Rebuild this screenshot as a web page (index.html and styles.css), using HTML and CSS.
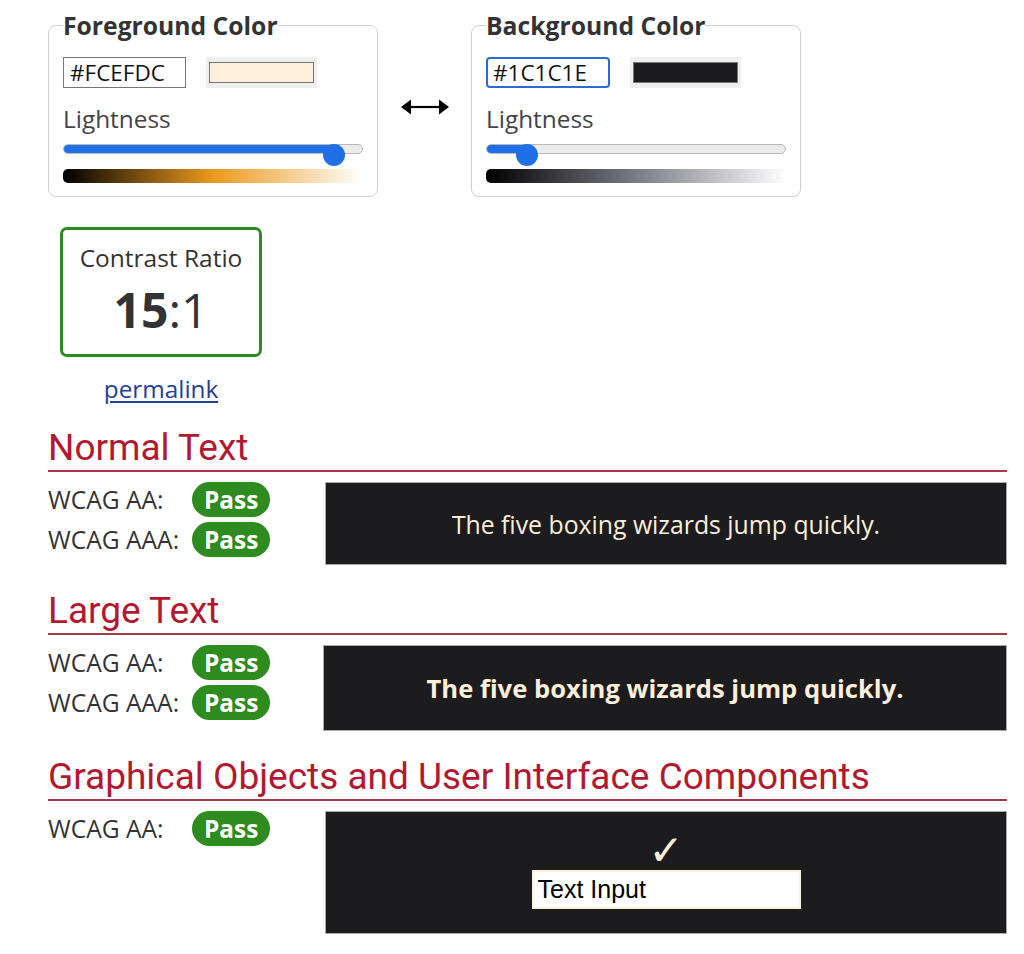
FILE: index.html
```html
<!DOCTYPE html>
<html lang="en">
<head>
<meta charset="utf-8">
<title>Contrast Checker</title>
<link rel="stylesheet" href="styles.css">
</head>
<body>
<main class="page">
  <div class="pickers">
    <fieldset class="picker">
      <legend>Foreground Color</legend>
      <div class="hex-row">
        <input class="hex" type="text" value="#FCEFDC">
        <span class="swatch"><span class="swatch-color fg-swatch"></span></span>
      </div>
      <div class="label">Lightness</div>
      <div class="slider">
        <div class="track"><div class="fill" style="width: 90.3%"></div></div>
        <div class="thumb" style="left: 90.3%"></div>
      </div>
      <div class="gradient fg-gradient"></div>
    </fieldset>
    <div class="swap" aria-label="swap colors">
      <svg width="48" height="18" viewBox="0 0 48 18"><path d="M8 9H40" stroke="#000" stroke-width="2.2"/><path d="M0 9L10 1.5V16.5Z" fill="#000"/><path d="M48 9L38 1.5V16.5Z" fill="#000"/></svg>
    </div>
    <fieldset class="picker">
      <legend>Background Color</legend>
      <div class="hex-row">
        <input class="hex hex-focus" type="text" value="#1C1C1E">
        <span class="swatch"><span class="swatch-color bg-swatch"></span></span>
      </div>
      <div class="label">Lightness</div>
      <div class="slider">
        <div class="track"><div class="fill" style="width: 13.7%"></div></div>
        <div class="thumb" style="left: 13.7%"></div>
      </div>
      <div class="gradient bg-gradient"></div>
    </fieldset>
  </div>

  <div class="ratio-block">
    <div class="ratio-box">
      <div class="ratio-title">Contrast Ratio</div>
      <div class="ratio-value"><strong>15</strong>:1</div>
    </div>
    <a class="permalink" href="#">permalink</a>
  </div>

  <section class="result">
    <h2>Normal Text</h2>
    <div class="result-row">
      <div class="levels">
        <div class="level"><span class="level-name">WCAG AA:</span><span class="badge">Pass</span></div>
        <div class="level"><span class="level-name">WCAG AAA:</span><span class="badge">Pass</span></div>
      </div>
      <div class="sample sample-normal">The five boxing wizards jump quickly.</div>
    </div>
  </section>

  <section class="result">
    <h2>Large Text</h2>
    <div class="result-row">
      <div class="levels">
        <div class="level"><span class="level-name">WCAG AA:</span><span class="badge">Pass</span></div>
        <div class="level"><span class="level-name">WCAG AAA:</span><span class="badge">Pass</span></div>
      </div>
      <div class="sample sample-large">The five boxing wizards jump quickly.</div>
    </div>
  </section>

  <section class="result">
    <h2>Graphical Objects and User Interface Components</h2>
    <div class="result-row">
      <div class="levels">
        <div class="level"><span class="level-name">WCAG AA:</span><span class="badge">Pass</span></div>
      </div>
      <div class="sample sample-ui">
        <div class="check">&#10003;</div>
        <div class="text-input">Text Input</div>
      </div>
    </div>
  </section>
</main>
</body>
</html>
```

FILE: styles.css
```css
* { box-sizing: border-box; }

body {
  margin: 0;
  font-family: "Open Sans", "Liberation Sans", sans-serif;
  color: #333;
  background: #fff;
}

.page {
  padding: 9px 17px 20px 48px;
}

.pickers {
  display: flex;
  align-items: center;
}

.picker {
  width: 330px;
  margin: 0;
  border: 1px solid #cfcfcf;
  border-radius: 8px;
  padding: 15px 14px 13px 14px;
}

.picker legend {
  padding: 0;
  font-size: 24.7px;
  font-weight: 700;
  line-height: 33px;
  color: #333;
}

.hex-row {
  display: flex;
  align-items: center;
  gap: 20px;
}

.hex {
  width: 123px;
  height: 31px;
  padding: 0 6px;
  border: 1px solid #767676;
  border-radius: 0;
  font-family: "Open Sans", sans-serif;
  font-size: 22.5px;
  color: #111;
  background: #fff;
  outline: none;
}

.hex-focus {
  width: 124px;
  border: 2px solid #2d6bd0;
  border-radius: 4px;
  padding: 0 5px;
}

.swatch {
  display: block;
  width: 111px;
  height: 31px;
  padding: 5px 3px;
  background: #efefef;
}

.swatch-color {
  display: block;
  width: 100%;
  height: 100%;
  border: 1px solid #777;
}

.fg-swatch { background: #FCEFDC; }
.bg-swatch { background: #1C1C1E; }

.label {
  margin-top: 14px;
  font-size: 24.4px;
  line-height: 33px;
  color: #444;
}

.slider {
  position: relative;
  height: 22px;
  margin-top: 9px;
}

.track {
  height: 10px;
  margin-top: 6px;
  border-radius: 5px;
  background: #ececec;
  border: 1px solid #b8b8b8;
  overflow: hidden;
}

.fill {
  height: 100%;
  background: #1f70e6;
}

.thumb {
  position: absolute;
  top: 0;
  width: 22px;
  height: 22px;
  margin-left: -11px;
  border-radius: 50%;
  background: #1f70e6;
}

.gradient {
  height: 14px;
  margin-top: 3px;
  border-radius: 5px 0 0 5px;
}

.fg-gradient {
  background: linear-gradient(to right, #000, hsl(36, 84%, 52%) 50%, #fff);
}

.bg-gradient {
  background: linear-gradient(to right, #000, hsl(240, 4%, 50%) 50%, #fff);
}

.swap {
  width: 93px;
  display: flex;
  justify-content: center;
  padding-top: 8px;
}

.swap svg { display: block; }

.ratio-block {
  width: 226px;
  margin-top: 30px;
  text-align: center;
}

.ratio-box {
  width: 202px;
  margin: 0 auto;
  border: 3px solid #2e8b22;
  border-radius: 7px;
  padding: 11px 0 11px;
}

.ratio-title {
  font-size: 24.5px;
  line-height: 33px;
  color: #333;
}

.ratio-value {
  margin-top: 3px;
  font-size: 48px;
  line-height: 66px;
  color: #333;
}

.ratio-value strong { font-weight: 700; }

.permalink {
  display: inline-block;
  margin-top: 15px;
  font-size: 24.3px;
  line-height: 33px;
  color: #23409a;
  text-decoration: underline;
  text-underline-offset: 3px;
}

.result {
  margin-top: 21px;
}

.result + .result { margin-top: 24px; }

.result h2 {
  margin: 0;
  font-family: Roboto, "Liberation Sans", sans-serif;
  font-weight: 400;
  font-size: 37px;
  line-height: 43px;
  padding-bottom: 1px;
  color: #b3192e;
  border-bottom: 2px solid #a53a49;
}

.result-row {
  display: flex;
  align-items: flex-start;
  margin-top: 10px;
}

.levels {
  width: 277px;
  display: flex;
  flex-direction: column;
  gap: 5px;
}

.level {
  display: flex;
  align-items: center;
}

.level-name {
  width: 144px;
  font-size: 24.6px;
  line-height: 33px;
  color: #333;
}

.badge {
  display: inline-block;
  height: 35px;
  line-height: 35px;
  padding: 0 12px;
  border-radius: 18px;
  background: #2d8b1f;
  color: #fff;
  font-size: 24.4px;
  font-weight: 700;
}

.sample {
  flex: 1;
  background: #1C1C1E;
  color: #FCEFDC;
  border: 1px solid #a9a9a9;
  display: flex;
  align-items: center;
  justify-content: center;
  font-size: 24.8px;
}

.sample-normal { height: 83px; }

.sample-large {
  height: 86px;
  font-weight: 700;
  font-size: 25.6px;
  margin-left: -2px;
}

.sample-ui {
  height: 123px;
  flex-direction: column;
}

.check {
  font-family: "DejaVu Sans", sans-serif;
  font-size: 42px;
  line-height: 30px;
  color: #FCEFDC;
  margin-bottom: 4px;
}

.text-input {
  width: 269px;
  height: 39px;
  padding: 0 4px;
  background: #fff;
  border: 2px solid #FCEFDC;
  font-family: "Liberation Sans", Arial, sans-serif;
  font-size: 25px;
  line-height: 35px;
  color: #000;
}
```
